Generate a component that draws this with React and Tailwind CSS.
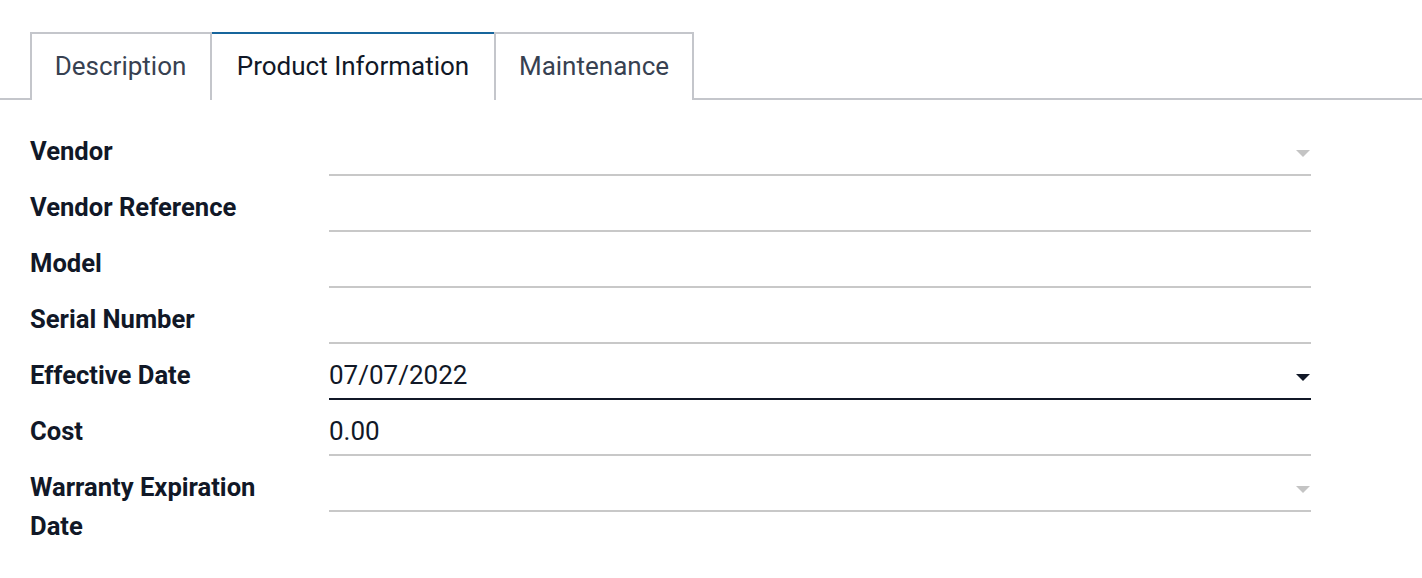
import React from "react";

const rows = [
  { label: "Vendor", value: "", caret: "light" },
  { label: "Vendor Reference", value: "" },
  { label: "Model", value: "" },
  { label: "Serial Number", value: "" },
  { label: "Effective Date", value: "07/07/2022", caret: "dark", active: true },
  { label: "Cost", value: "0.00" },
  { label: "Warranty Expiration Date", value: "", caret: "light" },
];

function Caret({ dark }) {
  return (
    <span
      className={
        "inline-block w-0 h-0 border-l-[7px] border-r-[7px] border-t-[7px] border-l-transparent border-r-transparent mr-[1px] " +
        (dark ? "border-t-[#111827]" : "border-t-[#c4c4c4]")
      }
    />
  );
}

export default function App() {
  return (
    <div
      className="w-[1422px] h-[578px] bg-white overflow-hidden"
      style={{ fontFamily: "Roboto, 'Noto Sans', sans-serif" }}
    >
      <div className="pt-[32px]">
        <div className="flex pl-[30px] border-b-2 border-[#c4c6cb] h-[68px]">
          <div className="h-[68px] w-[182px] border-2 border-b-0 border-[#c4c6cb] flex items-center justify-center pb-[2px] text-[26px] text-[#374151] mb-[-2px] bg-white pr-[1px]">
            Description
          </div>
          <div className="h-[68px] w-[282px] border-t-2 border-[#17659c] flex items-center justify-center pb-[2px] text-[26px] text-[#111827] mb-[-2px] bg-white relative z-10">
            Product Information
          </div>
          <div className="h-[68px] w-[200px] border-2 border-b-0 border-[#c4c6cb] flex items-center justify-center pb-[2px] text-[26px] text-[#374151] mb-[-2px] bg-white">
            Maintenance
          </div>
        </div>
      </div>
      <div className="pt-[20px]">
        {rows.map((r, i) => (
          <div key={i} className="flex items-start">
            <div className="w-[329px] pl-[30px] pr-[50px] pt-[12px] leading-[39px] text-[25.6px] font-bold text-[#111827]">
              {r.label}
            </div>
            <div
              className={
                "w-[982px] h-[56px] border-b-2 flex items-start justify-between pt-[12px] " +
                (r.active ? "border-[#111827]" : "border-[#c8c8c8]")
              }
            >
              <span className="leading-[39px] text-[26px] text-[#111827]">{r.value}</span>
              {r.caret && (
                <span className="pt-[18px] flex">
                  <Caret dark={r.caret === "dark"} />
                </span>
              )}
            </div>
          </div>
        ))}
      </div>
    </div>
  );
}
